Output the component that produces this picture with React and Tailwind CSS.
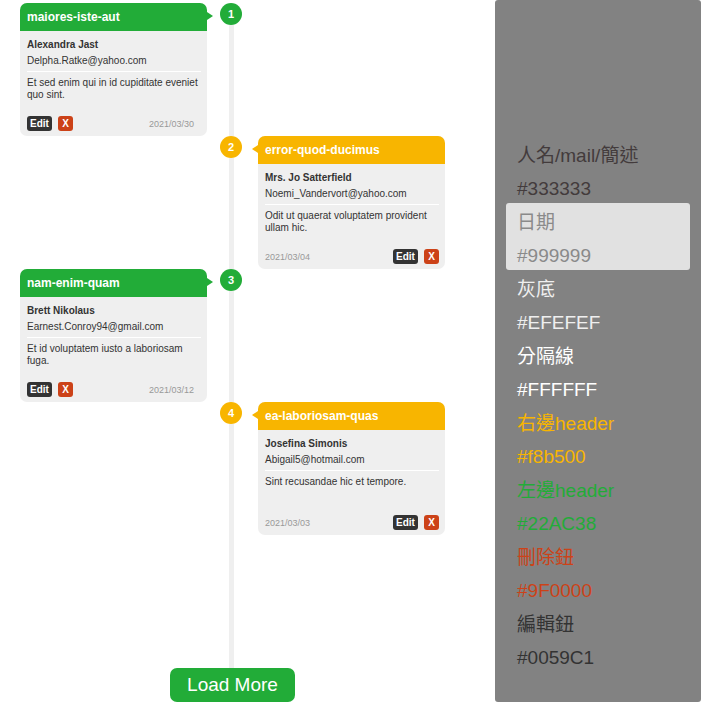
const entries = [
  { id: 1, title: 'maiores-iste-aut', name: 'Alexandra Jast', email: 'Delpha.Ratke@yahoo.com', text: 'Et sed enim qui in id cupiditate eveniet quo sint.', date: '2021/03/30' },
  { id: 2, title: 'error-quod-ducimus', name: 'Mrs. Jo Satterfield', email: 'Noemi_Vandervort@yahoo.com', text: 'Odit ut quaerat voluptatem provident ullam hic.', date: '2021/03/04' },
  { id: 3, title: 'nam-enim-quam', name: 'Brett Nikolaus', email: 'Earnest.Conroy94@gmail.com', text: 'Et id voluptatem iusto a laboriosam fuga.', date: '2021/03/12' },
  { id: 4, title: 'ea-laboriosam-quas', name: 'Josefina Simonis', email: 'Abigail5@hotmail.com', text: 'Sint recusandae hic et tempore.', date: '2021/03/03' },
];

const legend = [
  { label: '人名/mail/簡述', code: '#333333', tone: 'text-[#433b3c]' },
  { label: '日期', code: '#999999', tone: 'text-[#8a8a8a] bg-[#e1e1e1]' },
  { label: '灰底', code: '#EFEFEF', tone: 'text-[#efefef]' },
  { label: '分隔線', code: '#FFFFFF', tone: 'text-white' },
  { label: '右邊header', code: '#f8b500', tone: 'text-[#f8b500]' },
  { label: '左邊header', code: '#22AC38', tone: 'text-[#22ac38]' },
  { label: '刪除鈕', code: '#9F0000', tone: 'text-[#cc4218]' },
  { label: '編輯鈕', code: '#0059C1', tone: 'text-[#333333]' },
];

function Actions() {
  return (
    <div className="flex gap-1.5">
      <button type="button" className="h-[15px] w-[25px] rounded-[3px] bg-[#333333] text-[10px] leading-[15px] font-bold text-white">Edit</button>
      <button type="button" className="h-[15px] w-[15px] rounded-[3px] bg-[#cc4218] text-[10px] leading-[15px] font-bold text-white">X</button>
    </div>
  );
}

function Card({ entry, left }) {
  return (
    <article className="flex min-h-[133px] flex-col rounded-[7px] bg-[#efefef] text-[10px] leading-3 text-[#333333]">
      <h2 className={`relative rounded-t-[7px] py-1.5 pl-[7px] text-[12px] leading-4 font-bold text-white ${left ? 'bg-[#22ac38]' : 'bg-[#f8b500]'}`}>
        {entry.title}
        <span
          className={`absolute top-[9px] border-y-4 border-y-transparent ${left ? 'left-full border-l-[6px] border-l-[#22ac38]' : 'right-full border-r-[6px] border-r-[#f8b500]'}`}
        />
      </h2>
      <div className="flex flex-1 flex-col pt-2 pr-1.5 pb-[5px] pl-[7px]">
        <p className="font-bold">{entry.name}</p>
        <p className="mt-1">{entry.email}</p>
        <p className="mt-1 border-t border-white pt-[5px]">{entry.text}</p>
        <div className={`mt-auto flex items-center justify-between ${left ? 'pr-[7px]' : 'flex-row-reverse'}`}>
          <Actions />
          <time className="text-[9px] text-[#999999]">{entry.date}</time>
        </div>
      </div>
    </article>
  );
}

export default function App() {
  return (
    <div className="flex bg-white pr-px font-['Liberation_Sans','Noto_Sans_CJK_TC',sans-serif]">
      <main className="flex min-w-0 flex-1 flex-col pt-[3px] pr-[50px] pl-5">
        <ol>
          {entries.map((entry, i) => {
            const left = i % 2 === 0;
            return (
              <li key={entry.id} className="grid grid-cols-[1fr_51px_1fr]">
                <div>{left && <Card entry={entry} left />}</div>
                <div className="flex flex-col pl-[13px]">
                  <span className={`size-[22px] rounded-full text-center text-[11px] leading-[22px] font-bold text-white ${left ? 'bg-[#22ac38]' : 'bg-[#f8b500]'}`}>
                    {entry.id}
                  </span>
                  <span className="ml-[9px] w-[5px] flex-1 bg-[#efefef]" />
                </div>
                <div>{!left && <Card entry={entry} />}</div>
              </li>
            );
          })}
        </ol>
        <div className="grid flex-1 grid-cols-[1fr_51px_1fr]">
          <span className="col-start-2 ml-[22px] w-[5px] bg-[#efefef]" />
        </div>
        <button type="button" className="self-center rounded-[7px] bg-[#22ac38] px-[17px] text-[19px] leading-[34px] text-white">Load More</button>
      </main>
      <aside className="w-[206px] shrink-0 rounded-[3px] bg-[#828282] px-[11px] pt-[136px] pb-[30px]">
        <dl className="text-[19px] leading-[40px]">
          {legend.map((item) => (
            <div key={item.code} className={`rounded-[3px] pl-[11px] ${item.tone}`}>
              <dt className="h-[33px]">{item.label}</dt>
              <dd className="h-[34px]">{item.code}</dd>
            </div>
          ))}
        </dl>
      </aside>
    </div>
  );
}
